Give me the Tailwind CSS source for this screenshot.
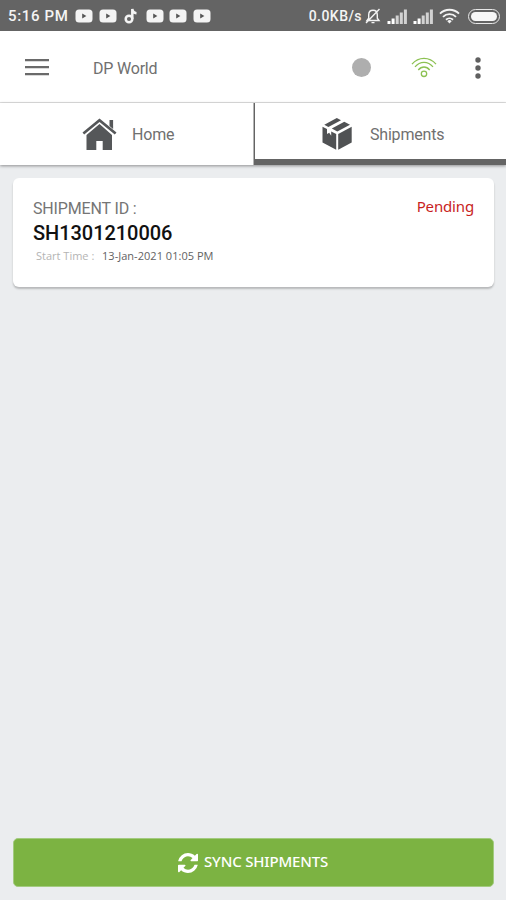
<!DOCTYPE html>
<html lang="en">
  <head>
    <meta charset="UTF-8" />
    <meta name="viewport" content="width=device-width, initial-scale=1.0" />
    <title>DP World - Shipments</title>

    <!-- Tailwind CSS -->
    <script src="https://cdn.jsdelivr.net/npm/@tailwindcss/browser@4"></script>
  </head>
  <body class="flex h-screen flex-col overflow-hidden bg-[#ebedef] font-['Roboto',sans-serif]">
    <!-- Shared icons -->
    <svg class="hidden">
      <symbol id="video" viewBox="0 0 18 14">
        <rect x="0.5" y="0.5" width="17" height="13" rx="3.5" fill="#f4f4f4" />
        <path d="M7.2 4.6v4.8L11.4 7z" fill="#555" />
      </symbol>
      <symbol id="signal" viewBox="0 0 20 15">
        <path d="M0.500 12h3v3h-3zM4.600 9.500h3V15h-3z" fill="#fff" />
        <path d="M8.700 6.500h3V15h-3zM12.800 3.500h3V15h-3zM16.900 0.500h3V15h-3z" fill="#d2d2d2" />
      </symbol>
    </svg>

    <!-- Status bar -->
    <div class="flex h-[31px] shrink-0 items-center bg-[#646464] pt-px pr-[6px] pl-[8px] text-[#f4f4f4]">
      <span class="w-[67px] text-[15px] font-medium tracking-[0.65px] whitespace-nowrap">5:16 PM</span>
      <div class="flex items-center gap-[5.500px]">
        <svg class="h-[14px] w-[18px]"><use href="#video" /></svg>
        <svg class="h-[14px] w-[18px]"><use href="#video" /></svg>
        <svg class="h-[16px] w-[18px]" viewBox="0 0 18 16" fill="none" stroke="#f4f4f4" stroke-width="2.500">
          <circle cx="7" cy="11" r="3.300" />
          <path d="M10.300 11V1c.3 2.600 1.500 4 4.200 4.200" />
        </svg>
        <svg class="h-[14px] w-[18px]"><use href="#video" /></svg>
        <svg class="h-[14px] w-[18px]"><use href="#video" /></svg>
        <svg class="h-[14px] w-[18px]"><use href="#video" /></svg>
      </div>
      <span class="ml-auto text-[14px] font-medium tracking-[0.45px]">0.0KB/s</span>
      <svg class="ml-[3px] h-[16px] w-[16px]" viewBox="0 0 16 16" fill="none" stroke="#f4f4f4" stroke-width="1.400">
        <path d="M2 12.500h12l-1.700-2.300V7c0-2.700-1.500-4.700-4.300-4.700S3.700 4.300 3.700 7v3.200zM6.500 14.600h3M1 15 14.500 1" />
      </svg>
      <svg class="ml-[6px] h-[15px] w-[20px]"><use href="#signal" /></svg>
      <svg class="ml-[6px] h-[15px] w-[20px]"><use href="#signal" /></svg>
      <svg class="ml-[6px] h-[16px] w-[21px]" viewBox="0 0 21 16" fill="none" stroke="#f4f4f4" stroke-width="1.900">
        <path d="M1 5.600a13.500 13.500 0 0 1 19 0M4 8.800a9.200 9.200 0 0 1 13 0M7 11.800a5 5 0 0 1 7 0" />
        <path d="M8.300 13.200 10.500 15.500l2.200-2.300a3 3 0 0 0-4.400 0z" fill="#f4f4f4" stroke="none" />
      </svg>
      <div class="ml-[8px] h-[15px] w-[32px] rounded-full border-[1.500px] border-[#e8e8e8] p-[2px]">
        <div class="h-full rounded-full bg-[#f8f8f8]"></div>
      </div>
    </div>

    <!-- App bar -->
    <header class="flex h-[72px] shrink-0 items-center border-b border-[#e2e2e2] bg-white pt-[2px] pr-[25px] pl-[25px]">
      <svg class="h-[18px] w-[24px]" viewBox="0 0 24 18" fill="#6a6a6a">
        <path d="M0 0h24v2.300H0zM0 7h24v2.300H0zM0 14h24v2.300H0z" />
      </svg>
      <h1 class="ml-[44px] pt-[2px] text-[16px] tracking-[-0.2px] text-[#707070]">DP World</h1>
      <div class="mr-[40px] ml-auto h-[19px] w-[19px] rounded-full bg-[#aeaeae]"></div>
      <svg class="mr-[38px] h-[21px] w-[26px]" viewBox="0 0 26 21" fill="none" stroke="#8cc152" stroke-width="1.300">
        <path d="M1 7.200C7.500-.5 18.500-.5 25 7.200M4 9.900c5-6 13-6 18 0M7.300 13c3.200-4 8.200-4 11.400 0" />
        <circle cx="13" cy="16.800" r="2.700" />
      </svg>
      <svg class="h-[22px] w-[6px]" viewBox="0 0 6 22" fill="#606060">
        <circle cx="3" cy="3" r="2.700" />
        <circle cx="3" cy="11" r="2.700" />
        <circle cx="3" cy="19" r="2.700" />
      </svg>
    </header>

    <!-- Tabs -->
    <nav class="flex h-[62px] shrink-0 bg-white text-[16px] text-[#707070] shadow-[0_1px_3px_rgba(0,0,0,0.4)]">
      <a class="flex w-[254px] items-center border-r border-[#b4b4b4] pl-[82px]">
        <svg class="h-[33px] w-[35px]" viewBox="0 0 35 33" fill="#555759">
          <path d="M27.500 2h3.600v9L27.500 8z" />
          <path d="M17.500 0.500 0.500 14.500l1.700 2L17.500 4l15.300 12.500 1.700-2z" />
          <path d="M17.500 6 4.500 17v15h9.800v-9h6.400v9h9.300V17z" />
        </svg>
        <span class="ml-[15px] pt-[2px] tracking-[-0.15px]">Home</span>
      </a>
      <a class="flex flex-1 items-center border-b-[6px] border-l border-[#646464] pt-[6px] pl-[67px]">
        <svg class="h-[34px] w-[30px]" viewBox="0 0 30 34" fill="#505254">
          <path d="M14.800 1 2.300 7.800 6.400 10 19 3.200z" />
          <path d="M22.300 4.800 9.800 11.600 15.300 14.600 28 7.800z" />
          <path d="M0.500 9.700 5 12.100v4.800l2.200-1.100 2 2.900v-4.300l5 2.700v15.700L0.500 25.600z" />
          <path d="M29.700 9.700v15.900L16.200 32.800V17.100z" />
        </svg>
        <span class="ml-[18px] pt-[2px] tracking-[-0.2px]">Shipments</span>
      </a>
    </nav>

    <!-- Shipment list -->
    <main class="flex-1 pt-[13px] pr-[12px] pl-[13px]">
      <article class="flex h-[109px] justify-between rounded-[6px] bg-white pt-[21px] pr-[20px] pl-[20px] shadow-[0_2px_2px_rgba(0,0,0,0.22)]">
        <div>
          <p class="text-[16px]/[20px] tracking-[-0.15px] text-[#757575]">SHIPMENT ID :</p>
          <p class="mt-[2px] text-[20px]/[24px] font-medium tracking-[-0.05px] text-[#111]">SH1301210006</p>
          <p class="mt-[3px] flex pl-[3px] font-['Open_Sans',sans-serif] text-[11px]/[16px] whitespace-nowrap">
            <span class="w-[66px] text-[#b4b4b4]">Start Time :</span>
            <span class="tracking-[0.03px] text-[#626262]">13-Jan-2021 01:05 PM</span>
          </p>
        </div>
        <span class="-mt-[2px] font-['Noto_Sans',sans-serif] text-[15px]/[18px] tracking-[-0.15px] text-[#c81e1e]">Pending</span>
      </article>
    </main>

    <!-- Sync action -->
    <footer class="pr-[12px] pb-[13px] pl-[13px]">
      <button class="flex h-[49px] w-full items-center rounded-[5px] border border-[#a3cb80] bg-[#7cb342] pl-[164px] font-['Noto_Sans',sans-serif] text-[15px] text-white">
        <svg class="h-[20px] w-[20px]" viewBox="0 0 1536 1536" fill="currentColor">
          <path d="M1511 928q0 5-1 7-64 268-268 434.500T764 1536q-146 0-282.500-55T238 1324l-129 129q-19 19-45 19t-45-19-19-45V960q0-26 19-45t45-19h448q26 0 45 19t19 45-19 45l-137 137q71 66 161 102t187 36q134 0 250-65t186-179q11-17 53-117 8-23 30-23h192q13 0 22.500 9.500t9.500 22.500zm25-800v448q0 26-19 45t-45 19h-448q-26 0-45-19t-19-45 19-45l138-138Q969 256 768 256q-134 0-250 65T332 500q-11 17-53 117-8 23-30 23H50q-13 0-22.500-9.500T18 608v-7q65-268 270-434.500T768 0q146 0 284 55.500T1297 212l130-129q19-19 45-19t45 19 19 45z" />
        </svg>
        <span class="ml-[6px] pb-[2px] font-medium tracking-[-0.17px] whitespace-nowrap">SYNC SHIPMENTS</span>
      </button>
    </footer>
  </body>
</html>
